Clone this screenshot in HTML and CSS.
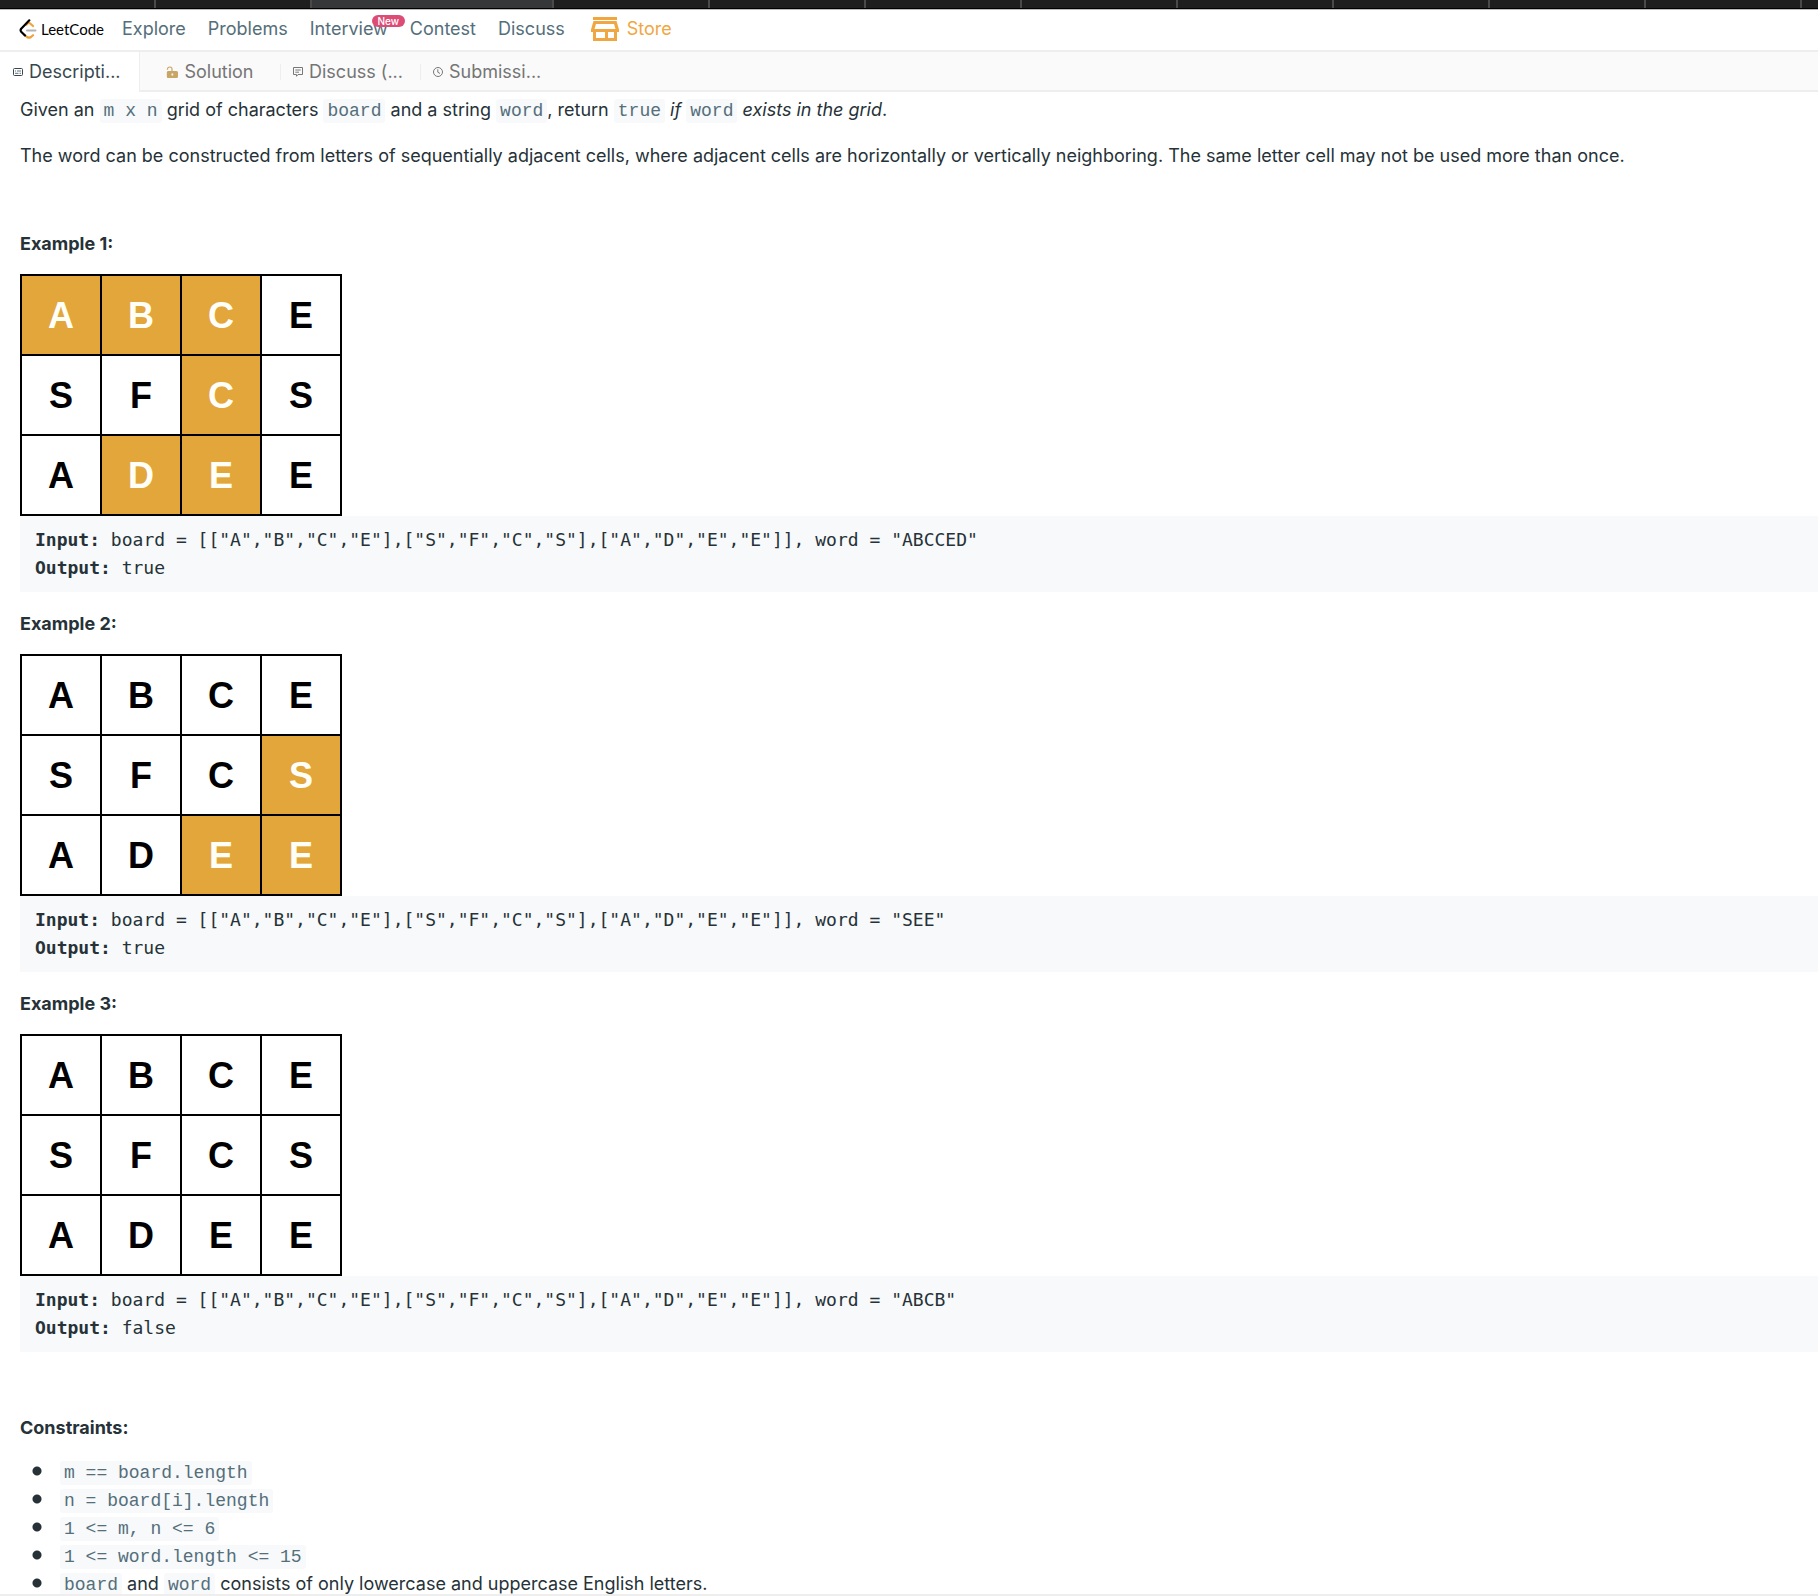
FILE: index.html
```html
<!DOCTYPE html>
<html lang="en">
<head>
<meta charset="utf-8">
<title>Word Search - LeetCode</title>
<link rel="stylesheet" href="styles.css">
</head>
<body>
<div class="strip" aria-hidden="true">
  <span></span><span></span><span class="current"></span><span></span><span></span><span></span><span></span><span></span><span></span><span></span><span></span><span></span>
</div>
<header class="header">
  <a class="logo" href="#">
    <svg width="18" height="20" viewBox="0 0 18 20" fill="none" stroke-width="2.2" stroke-linecap="round" stroke-linejoin="round">
      <path d="M7 5.800 8.800 4.300Q10 3.500 11.200 4.500L14 7M5.500 15.800 8 18Q10 19.300 12 18L14 16.200" stroke="#f0a33c"/>
      <path d="M8 11.500H16.500" stroke="#b3b3b3" stroke-width="2"/>
      <path d="M10.300 1.300 2.200 9.800Q1 11.300 2.200 12.800L6 16.500" stroke="#000"/>
    </svg>
    <span>LeetCode</span>
  </a>
  <nav class="nav">
    <a href="#">Explore</a>
    <a href="#">Problems</a>
    <a class="has-badge" href="#">Interview<span class="badge">New</span></a>
    <a href="#">Contest</a>
    <a href="#">Discuss</a>
  </nav>
  <a class="store" href="#">
    <svg width="28" height="24" viewBox="0 0 28 24" fill="#f0a742" fill-rule="evenodd">
      <path d="M2 0H26V3H2ZM2.500 4H25.500L28 12.500V15H26V24H2V15H0V12.500ZM5 7 3.500 12H24.500L23 7ZM5 15V21H14V15ZM17 15V21H23V15Z"/>
    </svg>
    <span>Store</span>
  </a>
</header>
<nav class="tabs">
  <a class="tab active" href="#">
    <svg width="10" height="10" viewBox="0 0 10 10" fill="none" stroke="#37474f"><rect x=".5" y="1.500" width="9" height="7" rx="1"/><path d="M2 4H3M4 4H8M2 6.300H5.500M6.500 6.300H8" stroke-width=".8"/></svg>
    <span>Descripti...</span>
  </a>
  <a class="tab centered" href="#">
    <svg width="12" height="12" viewBox="0 0 12 12" fill="#c8a668"><path d="M1.500 3.800V3.300Q1.500 1 3.800 1T6 3.300V5" fill="none" stroke="#c8a668" stroke-width="1.200"/><path fill-rule="evenodd" d="M2 5H10.500Q12 5 12 6.500V10.500Q12 12 10.500 12H2Q.8 12 .8 10.500V6.500Q.8 5 2 5ZM5.500 7.500V9.500H7.200V7.500Z"/></svg>
    <span>Solution</span>
  </a>
  <a class="tab divided" href="#">
    <svg width="10" height="10" viewBox="0 0 10 10" fill="none" stroke="#777"><path d="M.5.5H9.500V7.500H5L3.500 9.300V7.500H.5ZM2.300 3H7.700M2.300 5.200H6"/></svg>
    <span>Discuss (...</span>
  </a>
  <a class="tab divided" href="#">
    <svg width="10" height="10" viewBox="0 0 10 10" fill="none" stroke="#777"><circle cx="5" cy="5" r="4.500"/><path d="M4.800 2.300V5.200L7 6.500"/></svg>
    <span>Submissi...</span>
  </a>
</nav>
<main class="content">
  <section class="statement">
    <p>Given an <code>m x n</code> grid of characters <code>board</code> and a string <code>word</code>, return <code>true</code> <em>if</em> <code>word</code> <em>exists in the grid</em>.</p>
    <p>The word can be constructed from letters of sequentially adjacent cells, where adjacent cells are horizontally or vertically neighboring. The same letter cell may not be used more than once.</p>
  </section>

  <section class="examples">
    <article>
      <h2>Example 1:</h2>
      <table class="board">
        <tr><td class="on">A</td><td class="on">B</td><td class="on">C</td><td>E</td></tr>
        <tr><td>S</td><td>F</td><td class="on">C</td><td>S</td></tr>
        <tr><td>A</td><td class="on">D</td><td class="on">E</td><td>E</td></tr>
      </table>
      <pre><b>Input:</b> board = [["A","B","C","E"],["S","F","C","S"],["A","D","E","E"]], word = "ABCCED"
<b>Output:</b> true</pre>
    </article>
    <article>
      <h2>Example 2:</h2>
      <table class="board">
        <tr><td>A</td><td>B</td><td>C</td><td>E</td></tr>
        <tr><td>S</td><td>F</td><td>C</td><td class="on">S</td></tr>
        <tr><td>A</td><td>D</td><td class="on">E</td><td class="on">E</td></tr>
      </table>
      <pre><b>Input:</b> board = [["A","B","C","E"],["S","F","C","S"],["A","D","E","E"]], word = "SEE"
<b>Output:</b> true</pre>
    </article>
    <article>
      <h2>Example 3:</h2>
      <table class="board">
        <tr><td>A</td><td>B</td><td>C</td><td>E</td></tr>
        <tr><td>S</td><td>F</td><td>C</td><td>S</td></tr>
        <tr><td>A</td><td>D</td><td>E</td><td>E</td></tr>
      </table>
      <pre><b>Input:</b> board = [["A","B","C","E"],["S","F","C","S"],["A","D","E","E"]], word = "ABCB"
<b>Output:</b> false</pre>
    </article>
  </section>

  <section class="constraints">
    <h2>Constraints:</h2>
    <ul>
      <li><code>m == board.length</code></li>
      <li><code>n = board[i].length</code></li>
      <li><code>1 &lt;= m, n &lt;= 6</code></li>
      <li><code>1 &lt;= word.length &lt;= 15</code></li>
      <li><code>board</code> and <code>word</code> consists of only lowercase and uppercase English letters.</li>
    </ul>
  </section>
</main>
</body>
</html>
```
FILE: styles.css
```css
* { box-sizing: border-box; }

body {
  display: flex;
  flex-direction: column;
  height: 100vh;
  margin: 0;
  background: #fff;
  color: #263238;
  font: 18px/28px Inter, "Noto Sans", sans-serif;
}

a { color: inherit; text-decoration: none; }
svg { display: block; flex: none; }

/* Browser tab strip */
.strip {
  display: flex;
  flex: none;
  height: 10px;
  overflow: hidden;
  background: #1e1e1e;
  border-bottom: 1px solid #b8b8b8;
  box-shadow: inset 0 -1px #000;
}
.strip span {
  flex: none;
  width: 156px;
  height: 8px;
  border-right: 2px solid #4a4a4a;
}
.strip .current { width: 242px; background: #363739; }

/* Site header */
.header {
  display: flex;
  flex: none;
  align-items: center;
  height: 42px;
  padding: 0 0 2px 19px;
  border-bottom: 2px solid #eee;
  color: #546e7a;
}
.logo {
  display: flex;
  align-items: center;
  gap: 4px;
  width: 103px;
  color: #000;
  font: 15px/20px Lato, sans-serif;
}
.nav { display: flex; gap: 22px; }
.has-badge { position: relative; }
.badge {
  position: absolute;
  top: 0;
  right: -17px;
  width: 33px;
  height: 12px;
  border-radius: 6px;
  background: #dc4c76;
  color: #fff;
  font-size: 10px;
  font-weight: 500;
  line-height: 12px;
  text-align: center;
}
.store {
  display: flex;
  align-items: center;
  gap: 8px;
  margin-left: 26px;
  color: #f0a742;
}

/* Problem tabs */
.tabs {
  display: flex;
  flex: none;
  height: 40px;
  background: #fafafa;
  box-shadow: inset 0 -2px #eee;
  color: #757575;
}
.tab {
  display: flex;
  align-items: center;
  gap: 6px;
  width: 140px;
  padding-left: 13px;
  white-space: nowrap;
}
.centered { justify-content: center; padding: 0; }
.active {
  background: #fff;
  border-right: 1px solid #eee;
  color: #37474f;
}
.divided {
  background: linear-gradient(#eee, #eee) left center / 1px 16px no-repeat;
}

/* Problem text */
.content {
  flex: 1;
  min-height: 0;
  overflow: auto;
  scrollbar-width: none;
  padding: 4px 0 0 20px;
  border-bottom: 2px solid #eee;
}
.statement, .examples {
  display: flex;
  flex-direction: column;
  gap: 18px;
}
.statement { margin-bottom: 60px; }
.examples { margin-bottom: 62px; }
p, h2, ul, pre { margin: 0; }
h2 {
  margin-bottom: 16px;
  font-size: 18px;
  font-weight: 700;
  line-height: 28px;
}
code {
  padding: 2px 4px;
  border-radius: 3px;
  background: #f7f9fa;
  color: #546e7a;
  font: 18px/24px "Liberation Mono", monospace;
}
.board { border-collapse: collapse; }
.board td {
  width: 80px;
  height: 80px;
  padding: 2px 0 0;
  border: 2px solid #000;
  color: #000;
  font: bold 36px/40px "Liberation Sans", sans-serif;
  text-align: center;
}
.board .on { background: #e3a63b; color: #fffff8; }
pre {
  padding: 10px 15px;
  background: #f7f9fa;
  font: 18px/28px "DejaVu Sans Mono", monospace;
}
ul { padding-left: 12px; list-style: none; }
li {
  padding-left: 28px;
  background: radial-gradient(circle at 5px 13px, #263238 4px, transparent 5px) no-repeat;
}
```
